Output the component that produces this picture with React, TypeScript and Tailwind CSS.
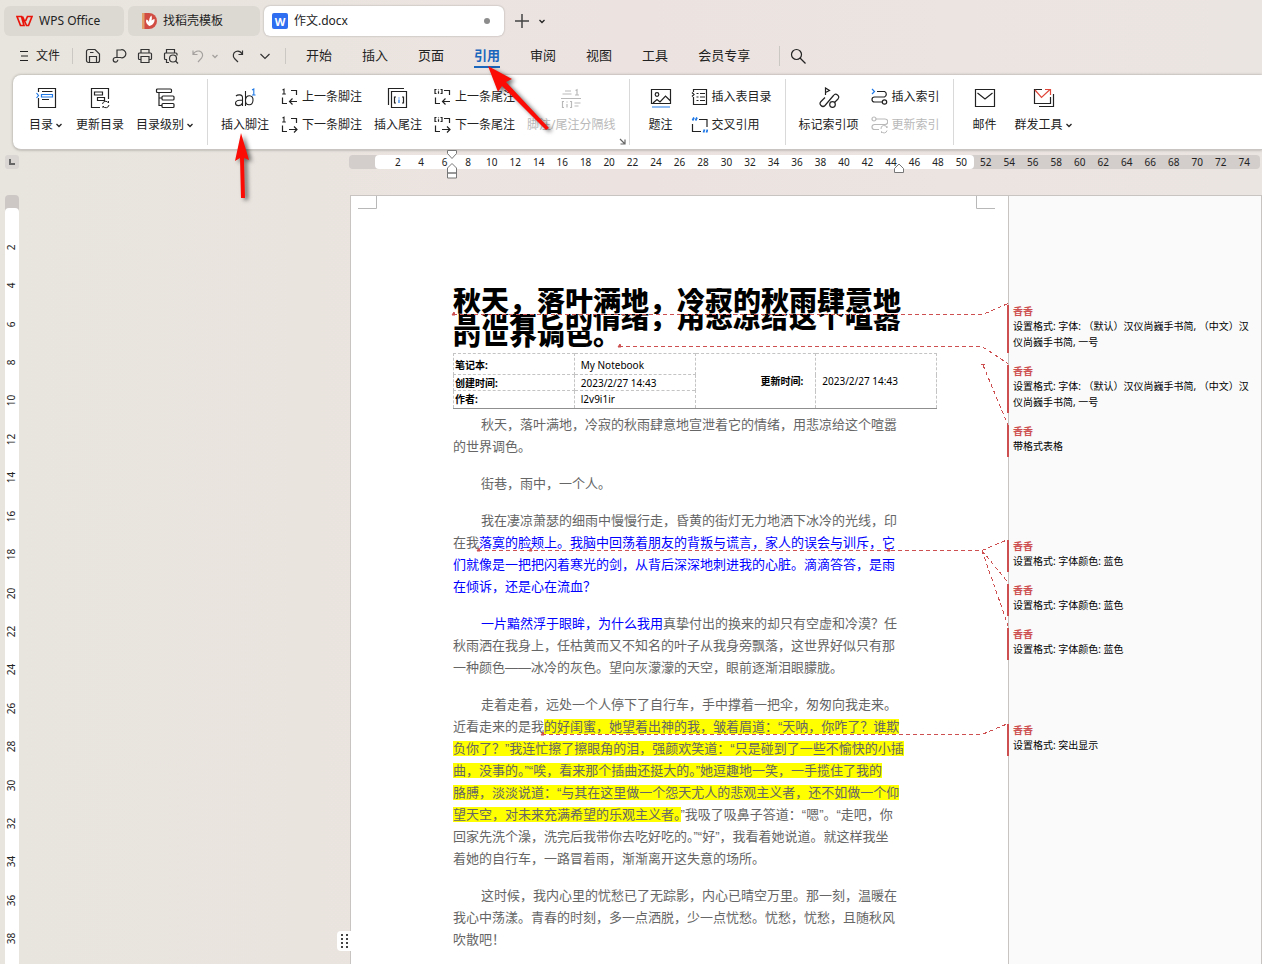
import type { ReactNode } from 'react';
import { clsx } from 'clsx';

const MENU_TABS = ['开始', '插入', '页面', '引用', '审阅', '视图', '工具', '会员专享'];

const RULER_INNER = Array.from({ length: 25 }, (_, i) => (i + 1) * 2);
const RULER_OUTER = Array.from({ length: 12 }, (_, i) => 52 + i * 2);
const RULER_SIDE = Array.from({ length: 19 }, (_, i) => (i + 1) * 2);

type Tone = 'plain' | 'blue' | 'mark';
type Segment = { text: string; tone?: Tone };

const PARAGRAPHS: Segment[][][] = [
  [
    [{ text: '秋天，落叶满地，冷寂的秋雨肆意地宣泄着它的情绪，用悲凉给这个喧嚣' }],
    [{ text: '的世界调色。' }],
  ],
  [[{ text: '街巷，雨中，一个人。' }]],
  [
    [{ text: '我在凄凉萧瑟的细雨中慢慢行走，昏黄的街灯无力地洒下冰冷的光线，印' }],
    [
      { text: '在我' },
      { text: '落寞的脸颊上。我脑中回荡着朋友的背叛与谎言，家人的误会与训斥，它', tone: 'blue' },
    ],
    [{ text: '们就像是一把把闪着寒光的剑，从背后深深地刺进我的心脏。滴滴答答，是雨', tone: 'blue' }],
    [{ text: '在倾诉，还是心在流血？', tone: 'blue' }],
  ],
  [
    [
      { text: '一片黯然浮于眼眸，为什么我用', tone: 'blue' },
      { text: '真挚付出的换来的却只有空虚和冷漠？任' },
    ],
    [{ text: '秋雨洒在我身上，任枯黄而又不知名的叶子从我身旁飘落，这世界好似只有那' }],
    [{ text: '一种颜色——冰冷的灰色。望向灰濛濛的天空，眼前逐渐泪眼朦胧。' }],
  ],
  [
    [{ text: '走着走着，远处一个人停下了自行车，手中撑着一把伞，匆匆向我走来。' }],
    [
      { text: '近看走来的是我' },
      { text: '的好闺蜜，她望着出神的我，皱着眉道：“天呐，你咋了？谁欺', tone: 'mark' },
    ],
    [{ text: '负你了？”我连忙擦了擦眼角的泪，强颜欢笑道：“只是碰到了一些不愉快的小插', tone: 'mark' }],
    [{ text: '曲，没事的。”“唉，看来那个插曲还挺大的。”她逗趣地一笑，一手揽住了我的', tone: 'mark' }],
    [{ text: '胳膊，淡淡说道：“与其在这里做一个怨天尤人的悲观主义者，还不如做一个仰', tone: 'mark' }],
    [
      { text: '望天空，对未来充满希望的乐观主义者。', tone: 'mark' },
      { text: '”我吸了吸鼻子答道：“嗯”。“走吧，你' },
    ],
    [{ text: '回家先洗个澡，洗完后我带你去吃好吃的。”“好”，我看着她说道。就这样我坐' }],
    [{ text: '着她的自行车，一路冒着雨，渐渐离开这失意的场所。' }],
  ],
  [
    [{ text: '这时候，我内心里的忧愁已了无踪影，内心已晴空万里。那一刻，温暖在' }],
    [{ text: '我心中荡漾。青春的时刻，多一点洒脱，少一点忧愁。忧愁，忧愁，且随秋风' }],
    [{ text: '吹散吧！' }],
  ],
];

const FONT_CHANGE = ['设置格式: 字体: （默认）汉仪尚巍手书简, （中文）汉', '仪尚巍手书简, 一号'];
const COMMENT_GROUPS = [
  [FONT_CHANGE, FONT_CHANGE, ['带格式表格']],
  [['设置格式: 字体颜色: 蓝色'], ['设置格式: 字体颜色: 蓝色'], ['设置格式: 字体颜色: 蓝色']],
  [['设置格式: 突出显示']],
];

function Icon({ w = 22, h = 22, className, children }: { w?: number; h?: number; className?: string; children: ReactNode }) {
  return (
    <svg
      width={w}
      height={h}
      viewBox={`0 0 ${w} ${h}`}
      fill="none"
      stroke="currentColor"
      strokeWidth="1.2"
      className={clsx('shrink-0', className)}
      aria-hidden="true"
    >
      {children}
    </svg>
  );
}

function Chevron({ className }: { className?: string }) {
  return (
    <Icon w={8} h={8} className={className}>
      <path d="M1.5 3l2.500 2.500L6.500 3" strokeWidth="1.300" />
    </Icon>
  );
}

function BigButton({ icon, label, arrow, disabled }: { icon: ReactNode; label: string; arrow?: boolean; disabled?: boolean }) {
  return (
    <button
      type="button"
      disabled={disabled}
      className="flex min-w-9 flex-col items-center gap-1.5 disabled:text-[#b9b9b9]"
    >
      {icon}
      <span className="flex items-center gap-0.5 whitespace-nowrap leading-5">
        {label}
        {arrow && <Chevron />}
      </span>
    </button>
  );
}

function SmallButton({ icon, label, disabled }: { icon: ReactNode; label: string; disabled?: boolean }) {
  return (
    <button
      type="button"
      disabled={disabled}
      className="flex h-5 items-center gap-1 whitespace-nowrap disabled:text-[#b9b9b9]"
    >
      {icon}
      {label}
    </button>
  );
}

function Group({ children, last }: { children: ReactNode; last?: boolean }) {
  return (
    <div className="relative flex shrink-0 items-stretch">
      <div className="flex gap-3 px-[13px] pt-3">{children}</div>
      {!last && <div className="my-1 w-px bg-[#d9d9d9]" />}
    </div>
  );
}

function NoteStepIcon({ end, next }: { end?: boolean; next?: boolean }) {
  return (
    <Icon w={17} h={18}>
      {end ? (
        <path d="M2.5 1.5H1v4h1.500M6.500 1.500H8v4H6.500M4.500 1.500v.8M4.500 3.200v2.500" />
      ) : (
        <path d="M1.500 2l1.500-.8V6M1.200 6h3.600" strokeWidth="1.100" />
      )}
      <path d="M10 2.500h5.500V7M1.500 9.500v6H6" />
      {next ? <path d="M8 13.500h8M13 10.500l3 3-3 3" /> : <path d="M16 13.500H8.500M11.500 10.500l-3 3 3 3" />}
    </Icon>
  );
}

function TitleBar() {
  return (
    <header className="flex shrink-0 items-center gap-1 px-1 pt-1.5 text-[12px]">
      <button type="button" className="flex h-[30px] w-[120px] items-center gap-1.5 rounded-md bg-[#dcd9d3] pl-3">
        <Icon w={17} h={12} className="text-[#e8150b]">
          <path d="M1 1.500h4.500L8 10.500H4.500zM6.500 1.500l4 9h2L16 1.500h-4.500L9.500 6" strokeWidth="1.700" />
        </Icon>
        WPS Office
      </button>
      <button type="button" className="flex h-[30px] w-[132px] items-center gap-1.5 rounded-md bg-[#dcd9d3] pl-3.5">
        <svg width="15" height="16" viewBox="0 0 15 16" aria-hidden="true">
          <path d="M0 0h7a8 8 0 0 1 0 16H0z" fill="#d14d44" />
          <path d="M0 0h2.500v16H0z" fill="#e2a06a" />
          <path d="M7.500 13C4 11 3.500 8 4.500 6.500 6 7 6.500 8 7 9c0-2.500.5-5 2.500-6.500.5 2 .5 3.500 0 5 1-1 2-1.500 3-1.500C13 9 11 12 7.500 13z" fill="#fff" />
        </svg>
        找稻壳模板
      </button>
      <button
        type="button"
        className="flex h-[30px] w-[240px] items-center gap-1.5 rounded-md bg-white pl-2 pr-3.5 shadow-[0_0_2px_#00000050]"
      >
        <span className="flex size-4 items-center justify-center rounded-[2px] bg-[#2f6ef0] text-[11px] font-bold leading-none text-white">
          W
        </span>
        作文.docx
        <span className="ml-auto size-1.5 rounded-full bg-[#8c8c8c]" />
      </button>
      <button type="button" aria-label="新建" className="ml-1.5">
        <Icon w={16} h={16} className="text-[#444]">
          <path d="M8 1v14M1 8h14" strokeWidth="1.500" />
        </Icon>
      </button>
      <button type="button" aria-label="标签列表" className="ml-1">
        <Chevron />
      </button>
    </header>
  );
}

function MenuBar() {
  return (
    <nav className="flex h-[39px] shrink-0 items-center pl-5">
      <button type="button" className="flex items-center gap-2 text-[12px]">
        <Icon w={8} h={12}>
          <path d="M0 1.500h8M1 6h7M0 10.500h8" />
        </Icon>
        文件
      </button>
      <div className="ml-3 h-4 w-px bg-[#cbc7c3]" />
      <div className="ml-3 flex items-center gap-2.5 text-[#333]">
        <button type="button" aria-label="保存">
          <Icon w={16} h={16}>
            <path d="M1.500 12.500v-9a2 2 0 0 1 2-2h6.500l4.500 4.500v6.500a2 2 0 0 1-2 2h-9a2 2 0 0 1-2-2zM4.500 14.500V8.500h7v6M5 4.500h3.500" />
          </Icon>
        </button>
        <button type="button" aria-label="输出">
          <Icon w={16} h={16}>
            <path d="M6 9.500V2h3.500a4 4 0 1 1 0 7.500H4.500a2.300 2.300 0 1 0 2.300 2.300" />
          </Icon>
        </button>
        <button type="button" aria-label="打印">
          <Icon w={16} h={16}>
            <path d="M4 5V1.500h8V5M4 11.500H2.500a1 1 0 0 1-1-1V6a1 1 0 0 1 1-1h11a1 1 0 0 1 1 1v4.500a1 1 0 0 1-1 1H12M4 8.500h8v6H4z" />
          </Icon>
        </button>
        <button type="button" aria-label="打印预览">
          <Icon w={16} h={16}>
            <path d="M3.500 5V1.500h8V5M6 14.500H3.500v-3h-1a1 1 0 0 1-1-1V6a1 1 0 0 1 1-1h10.500a1 1 0 0 1 1 1v1.500" />
            <circle cx="10" cy="10.500" r="3.500" />
            <path d="M12.500 13l2.500 2.500" />
          </Icon>
        </button>
        <button type="button" aria-label="撤销" className="ml-0.5 flex items-center gap-1.5 text-[#a5a19e]">
          <Icon w={14} h={14}>
            <path d="M2 1.500v4h4.500M2.200 5.300C3.500 3 6 1.600 8.500 2.200c3 .8 4.200 4.300 2 7L7 13" />
          </Icon>
          <Chevron />
        </button>
        <button type="button" aria-label="恢复" className="ml-0.5">
          <Icon w={14} h={14}>
            <path d="M11.500 1.500v4H7.500M11.300 5.300C10 3 7.500 1.600 5 2.500c-3 1.200-3.500 4.500-1.500 7L7 13" />
          </Icon>
        </button>
        <button type="button" aria-label="更多" className="ml-1">
          <Icon w={12} h={12}>
            <path d="M1.500 4L6 8.500 10.500 4" />
          </Icon>
        </button>
      </div>
      <div className="ml-3.5 h-4 w-px bg-[#cbc7c3]" />
      <div className="ml-5 flex h-full items-center gap-[30px] text-[13px]">
        {MENU_TABS.map((tab) => (
          <button
            key={tab}
            type="button"
            className={clsx(
              'h-6 border-b-2 leading-5',
              tab === '引用' ? 'border-[#1a66bd] font-bold text-[#1a66bd]' : 'border-transparent',
            )}
          >
            {tab}
          </button>
        ))}
      </div>
      <div className="ml-[29px] h-5 w-px bg-[#cbc7c3]" />
      <button type="button" aria-label="搜索" className="ml-2.5">
        <Icon w={16} h={16}>
          <circle cx="6.500" cy="6.500" r="5" />
          <path d="M10 10l5.500 5.500" />
        </Icon>
      </button>
    </nav>
  );
}

function Ribbon() {
  return (
    <section className="ml-[13px] flex h-[75px] shrink-0 overflow-hidden rounded-l-lg border-b border-[#c9c5c2] bg-white pl-0.5 text-[12px] shadow-[0_0_3px_#00000055]">
      <Group>
        <BigButton
          label="目录"
          arrow
          icon={
            <Icon>
              <path d="M3.500 5V1.500h17v19h-17V11M7 4.500h10.500M7 12.500h7" />
              <path d="M6.500 7.500h11v2.500h-11zM1.500 6l2 2.500-2 2.500" stroke="#1f78e6" />
            </Icon>
          }
        />
        <BigButton
          label="更新目录"
          icon={
            <Icon>
              <path d="M11 20.500H2.500v-19h17V12M5.500 5h8v3h-8zM8.500 10.500h7v3h-7z" />
              <path d="M13.500 17a3.200 3.200 0 0 1 6-1v-2M20 18a3.200 3.200 0 0 1-6 1v2" strokeWidth="1" />
            </Icon>
          }
        />
        <BigButton
          label="目录级别"
          arrow
          icon={
            <Icon>
              <rect x="2.500" y="2" width="15" height="3.500" rx="1" />
              <rect x="8" y="9" width="12" height="4" rx="1" />
              <rect x="8" y="16.500" width="12" height="4" rx="1" />
              <path d="M5 5.500v13h3M5 11h3" />
            </Icon>
          }
        />
      </Group>
      <Group>
        <BigButton
          label="插入脚注"
          icon={
            <Icon>
              <path d="M2 9c1.500-1.500 6.500-2 6.500 1.500V19M8.500 13c-3 0-7 .3-7 3 0 3.500 5.500 3.500 7 0M11.500 4v15M11.500 13c.5-6 8-5.500 7.500.2-.3 6-7 6-7.500.8" strokeWidth="1.100" />
              <path d="M18 3l1.800-1v6M18 8h3.500" stroke="#1f78e6" strokeWidth="1.100" />
            </Icon>
          }
        />
        <div className="flex flex-col gap-2">
          <SmallButton label="上一条脚注" icon={<NoteStepIcon />} />
          <SmallButton label="下一条脚注" icon={<NoteStepIcon next />} />
        </div>
        <BigButton
          label="插入尾注"
          icon={
            <Icon>
              <path d="M1.500 18V1.500H17M4.500 4.500h15v16h-15z" />
              <path d="M9 10H7.500v6H9M15 10h1.500v6H15" />
              <path d="M12 10.500v1M12 12.500v3.500" stroke="#1f78e6" />
            </Icon>
          }
        />
        <div className="flex flex-col gap-2">
          <SmallButton label="上一条尾注" icon={<NoteStepIcon end />} />
          <SmallButton label="下一条尾注" icon={<NoteStepIcon end next />} />
        </div>
        <BigButton
          label="脚注/尾注分隔线"
          disabled
          icon={
            <Icon>
              <path d="M5 4h6M2.500 7h9M15.500 3.500l1.500-.8V8M15 8h4M1 11.500h20M4 14.500H2.500v6H4M10 14.500h1.500v6H10M7 14.500v1M7 17v3.500M14.500 16h6M14.500 19h4" />
            </Icon>
          }
        />
        <button type="button" aria-label="脚注和尾注设置" className="absolute bottom-1 right-1">
          <Icon w={7} h={7} className="text-[#666]">
            <path d="M1 1l4.500 4.500M6 1.500V6H1.500" />
          </Icon>
        </button>
      </Group>
      <Group>
        <BigButton
          label="题注"
          icon={
            <Icon>
              <path d="M1.500 2.500h19v14h-19zM3 16l4-3.500 3 2.500 5.500-6 5 5" />
              <circle cx="7" cy="7.500" r="1.800" />
              <path d="M2 20h18" stroke="#1f78e6" />
            </Icon>
          }
        />
        <div className="flex flex-col gap-2">
          <SmallButton
            label="插入表目录"
            icon={
              <Icon w={17} h={18}>
                <path d="M2.500 4V1.500h13v15h-13V9M1 4.500l2 2-2 2M5.500 5.500h2M9 5.500h5M5.500 9h2M9 9h5M5.500 12.500h2M9 12.500h5" />
              </Icon>
            }
          />
          <SmallButton
            label="交叉引用"
            icon={
              <Icon w={17} h={18}>
                <path d="M8 3.500h8V11M1.500 8v7.500H10" />
                <path d="M1.500 4.500l1.500-3M4.500 4.500L6 1.500M12.500 16.500l1-3M15.500 16.500l1-3" stroke="#1f78e6" strokeWidth="1.800" />
              </Icon>
            }
          />
        </div>
      </Group>
      <Group>
        <BigButton
          label="标记索引项"
          icon={
            <Icon>
              <path d="M7.500 8V1l4 2.500-4 2" />
              <path d="M7 10.500l-4 4a2.800 2.800 0 0 0 4 4L15.500 8.500a2.800 2.800 0 0 1 4.500 3.500L16.500 15.500" />
              <circle cx="14.500" cy="17.500" r="2.800" />
            </Icon>
          }
        />
        <div className="flex flex-col gap-2">
          <SmallButton
            label="插入索引"
            icon={
              <Icon w={17} h={18}>
                <path d="M6 3.500h7.500a3 3 0 0 1 0 5.500h-10a2.500 2.500 0 0 0 0 5H11" />
                <circle cx="13.500" cy="14" r="2.200" />
                <path d="M1 1l2.500 2.500L1 6" stroke="#1f78e6" />
              </Icon>
            }
          />
          <SmallButton
            label="更新索引"
            disabled
            icon={
              <Icon w={17} h={18}>
                <path d="M5 3h9a2.500 2.500 0 0 1 0 5.500H3.500a2.500 2.500 0 0 0 0 5H8" />
                <circle cx="3" cy="3" r="2" />
                <path d="M10 13a3 3 0 0 1 6-1v-2M16 14.500a3 3 0 0 1-5.500 1v1.500" strokeWidth="1" />
              </Icon>
            }
          />
        </div>
      </Group>
      <Group last>
        <BigButton
          label="邮件"
          icon={
            <Icon>
              <path d="M1.500 2.500h19v17h-19zM3.500 6l7.500 6 7.500-6" />
            </Icon>
          }
        />
        <BigButton
          label="群发工具"
          arrow
          icon={
            <Icon>
              <path d="M9 2.500H1.500v14h16V10M20.500 7v12.500H6" />
              <path d="M2 3l6.500 7.500L17 2.500M12 2.500h5.500V8" stroke="#e0483c" />
            </Icon>
          }
        />
      </Group>
    </section>
  );
}

function TopRuler() {
  return (
    <div className="mt-[5px] flex h-3.5 shrink-0 pl-[5px] pr-0.5 text-[10px] leading-[14px] text-[#222]">
      <button type="button" aria-label="制表符" className="flex size-3.5 items-center justify-center rounded-[3px] bg-[#d9d6d3]">
        <span className="size-1.5 border-b-2 border-l-2 border-[#666]" />
      </button>
      <div className="flex-1" />
      <div className="relative flex w-[911px] shrink-0 rounded bg-[#d3cdcb]">
        <div className="ml-[26px] flex w-[599px] rounded bg-white pl-[11px] pr-px">
          {RULER_INNER.map((n) => (
            <span key={n} className="flex-1 text-center">{n}</span>
          ))}
        </div>
        <div className="flex flex-1 pr-1">
          {RULER_OUTER.map((n) => (
            <span key={n} className="flex-1 text-center">{n}</span>
          ))}
        </div>
        <svg className="absolute -top-1.5 left-[97px]" width="12" height="32" viewBox="0 0 12 32" fill="#fff" stroke="#777" aria-hidden="true">
          <path d="M1.500 1.500h9v3L6 9.500 1.500 4.500zM1.500 24V19L6 14.500l4.500 4.500v5zM1.500 24h9v5h-9z" />
        </svg>
        <svg className="absolute left-[544px] top-2" width="12" height="12" viewBox="0 0 12 12" fill="#fff" stroke="#777" aria-hidden="true">
          <path d="M1.500 9.500V5.500L6 1l4.500 4.500v4z" />
        </svg>
      </div>
    </div>
  );
}

function SideRuler() {
  return (
    <div className="ml-[5px] flex w-3.5 shrink-0 flex-col rounded-t bg-[#cdc8c6] pt-[13px] text-[10px] text-[#222]">
      <div className="flex flex-1 flex-col rounded-t bg-white pb-1.5 pt-5">
        {RULER_SIDE.map((n) => (
          <span key={n} className="flex flex-1 items-center justify-center">
            <span className="-rotate-90">{n}</span>
          </span>
        ))}
      </div>
    </div>
  );
}

function InfoTable() {
  const dashed = 'border border-dashed border-[#c4c4c4]';
  return (
    <table className="mt-[5px] w-[484px] table-fixed border-collapse border-b border-[#8f8f8f] text-[10px] leading-[14px] text-black">
      <tbody>
        <tr className="h-[21px]">
          <th className={clsx(dashed, 'pl-px pt-0.5 text-left')}>笔记本:</th>
          <td className={clsx(dashed, 'pl-1.5 pt-0.5')}>My Notebook</td>
          <th rowSpan={3} className={clsx(dashed, 'pr-3 text-right')}>更新时间:</th>
          <td rowSpan={3} className={clsx(dashed, 'pl-1.5')}>2023/2/27 14:43</td>
        </tr>
        <tr className="h-4">
          <th className={clsx(dashed, 'pl-px text-left')}>创建时间:</th>
          <td className={clsx(dashed, 'pl-1.5')}>2023/2/27 14:43</td>
        </tr>
        <tr className="h-[18px]">
          <th className={clsx(dashed, 'pb-0.5 pl-px text-left')}>作者:</th>
          <td className={clsx(dashed, 'pb-0.5 pl-1.5')}>l2v9i1ir</td>
        </tr>
      </tbody>
    </table>
  );
}

// exact line spacing is smaller than the glyphs, so each line clips the one below it
function Heading() {
  return (
    <h1 className="whitespace-nowrap text-[28px] font-black leading-[28px] text-black">
      <span className="flex h-[26px] items-end overflow-hidden">秋天，落叶满地，冷寂的秋雨肆意地</span>
      <span className="flex h-[17px] items-end overflow-hidden">宣泄着它的情绪，用悲凉给这个喧嚣</span>
      <span className="flex h-[17px] items-end overflow-hidden">的世界调色。</span>
    </h1>
  );
}

// dashed leaders from revised text to the balloons, plus the margin corners
function Leaders() {
  return (
    <svg className="pointer-events-none absolute -left-px top-0" width="660" height="768" fill="none" aria-hidden="true">
      <path d="M8 12.500h18.500V0M645 12.500h-18.500V0" stroke="#b8b8b8" />
      <g stroke="#cd4f4f" strokeDasharray="4 3" shapeRendering="crispEdges">
        <path d="M103 118.500h530l25-11" />
        <path d="M269 150.500h363l26 17" />
        <path d="M631 168.500h4M633 169l25 60" />
        <path d="M128 354.500h504l26-11M632 354.500l26 32M632 354.500l26 75" />
        <path d="M192 538.500h440l26-11" />
      </g>
      <path
        d="M102 119l2-3 1 3zM268 151l2-3 1 3zM127 355l2-3 1 3zM179 355l2-3 1 3zM537 355l2-3 1 3zM191 539l2-3 1 3z"
        fill="#cd4f4f"
        stroke="#cd4f4f"
      />
    </svg>
  );
}

function DocumentPage() {
  return (
    <article className="relative w-[658px] shrink-0 border-l border-t border-[#c8c4c2] bg-white pl-[102px] pt-[92px]">
      <Heading />
      <InfoTable />
      <div className="mt-[5px] flex flex-col gap-[15px] whitespace-nowrap font-['Liberation_Sans','Noto_Sans_CJK_SC',sans-serif] text-[13px] leading-[22px] text-[#666]">
        {PARAGRAPHS.map((lines, p) => (
          <p key={p} className="pl-7">
            {lines.map((segments, l) => (
              <span key={l} className={clsx('block', l > 0 && '-ml-7')}>
                {segments.map(({ text, tone }) => (
                  <span
                    key={text}
                    className={clsx(tone === 'blue' && 'text-[#0000ff]', tone === 'mark' && 'bg-[#ffff00]')}
                  >
                    {text}
                  </span>
                ))}
              </span>
            ))}
          </p>
        ))}
      </div>
      <Leaders />
      <button
        type="button"
        aria-label="段落布局"
        className="absolute -left-3.5 top-[735px] grid h-5 w-3.5 grid-cols-2 place-items-center rounded-l bg-white p-0.5"
      >
        {Array.from({ length: 8 }, (_, i) => (
          <span key={i} className="size-[2px] bg-[#444]" />
        ))}
      </button>
    </article>
  );
}

function Comments() {
  return (
    <aside className="relative flex w-[254px] shrink-0 flex-col border-l border-r border-t border-[#c8c4c2] bg-[#fafafa] pt-[109px] text-[10px] text-black">
      {COMMENT_GROUPS.map((group, g) => (
        <div key={g} className={clsx('flex flex-col gap-3', g === 1 && 'mt-[83px]', g === 2 && 'mt-16')}>
          {group.map((lines, i) => (
            <div key={i} className="-ml-0.5 border-l-2 border-[#cd4f4f] pb-[3px] pl-1">
              <div className="font-bold leading-[13px] text-[#cd4f4f]">香香</div>
              {lines.map((line) => (
                <div key={line} className="whitespace-nowrap leading-4">{line}</div>
              ))}
            </div>
          ))}
        </div>
      ))}
    </aside>
  );
}

function PointerArrows() {
  return (
    <svg
      className="pointer-events-none absolute left-0 top-0 drop-shadow-[3px_2px_2px_#00000090]"
      width="560"
      height="205"
      aria-hidden="true"
    >
      <g fill="#fb0d06">
        <path d="M488 66l24 13-6 3 43 46-3 2-44-44-4 6z" />
        <path d="M241 133l8 27-5-2 1 40h-4l-1-40-5 3z" />
      </g>
    </svg>
  );
}

export default function App() {
  return (
    <div className="relative flex h-screen flex-col overflow-hidden bg-linear-to-r from-[#e8e5de] via-[#ece3e0] to-[#ebe5e1] font-['Noto_Sans','Noto_Sans_CJK_SC',sans-serif] text-[#222]">
      <TitleBar />
      <MenuBar />
      <Ribbon />
      <TopRuler />
      <main className="mt-[26px] flex min-h-0 flex-1 overflow-hidden">
        <SideRuler />
        <div className="flex-1" />
        <DocumentPage />
        <Comments />
      </main>
      <PointerArrows />
    </div>
  );
}
